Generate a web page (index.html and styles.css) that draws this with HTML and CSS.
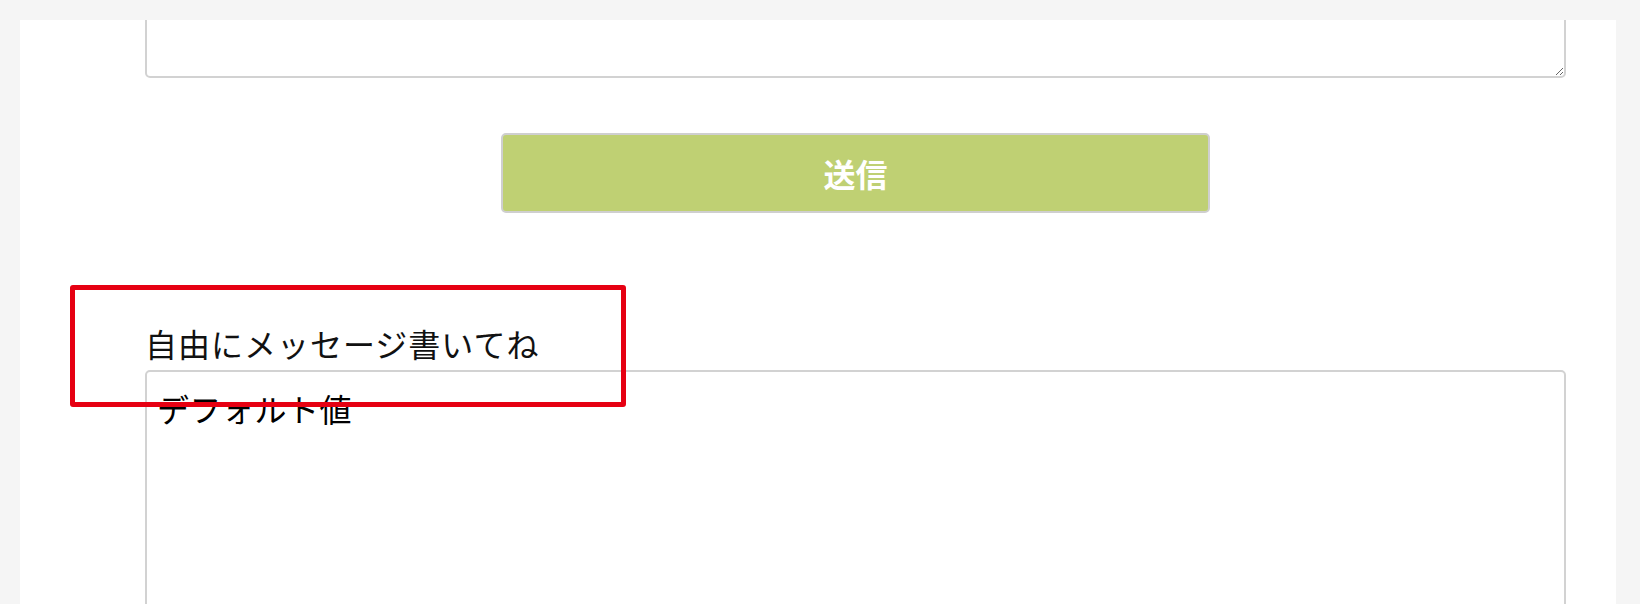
FILE: index.html
```html
<!DOCTYPE html>
<html lang="ja">
<head>
<meta charset="utf-8">
<title>フォーム</title>
<link rel="stylesheet" href="styles.css">
</head>
<body>
<div class="card">
  <form class="form">
    <textarea class="field field-top"></textarea>
    <div class="actions">
      <button type="button" class="submit">送信</button>
    </div>
    <label class="label" for="msg">自由にメッセージ書いてね</label>
    <textarea id="msg" class="field field-msg">デフォルト値</textarea>
  </form>
</div>
<div class="highlight"></div>
</body>
</html>
```
FILE: styles.css
```css
html, body {
  margin: 0;
  padding: 0;
  height: 100%;
  overflow: hidden;
}
body {
  background: #f5f5f5;
  font-family: "Noto Sans CJK JP", "Noto Sans", sans-serif;
  color: #111;
  padding-top: 20px;
  box-sizing: border-box;
}
.card {
  margin: 0 24px 0 20px;
  background: #fff;
  height: 100%;
  overflow: hidden;
}
.form {
  display: flex;
  flex-direction: column;
  padding: 0 50px 0 125px;
}
.field {
  box-sizing: border-box;
  width: 100%;
  border: 2px solid #d2d2d2;
  border-radius: 5px;
  background: #fff;
  font-family: inherit;
  font-size: 32px;
  line-height: 48px;
  color: #000;
  outline: none;
}
.field-top {
  height: 100px;
  margin-top: -42px;
}
.actions {
  display: flex;
  justify-content: center;
  margin-top: 55px;
}
.submit {
  width: 709px;
  height: 80px;
  background: #bfd073;
  border: 2px solid #cfcfcf;
  border-radius: 5px;
  color: #fff;
  font-family: inherit;
  font-size: 32px;
  font-weight: 700;
  padding: 0;
}
.label {
  display: block;
  margin-top: 106px;
  font-size: 32px;
  line-height: 48px;
  letter-spacing: 1px;
  color: #111;
}
.field-msg {
  margin-top: 3px;
  height: 320px;
  padding: 12px 10px;
  letter-spacing: 0.5px;
}
.highlight {
  position: absolute;
  left: 70px;
  top: 285px;
  width: 556px;
  height: 122px;
  box-sizing: border-box;
  border: 5px solid #e60012;
  border-radius: 3px;
  pointer-events: none;
}
```
